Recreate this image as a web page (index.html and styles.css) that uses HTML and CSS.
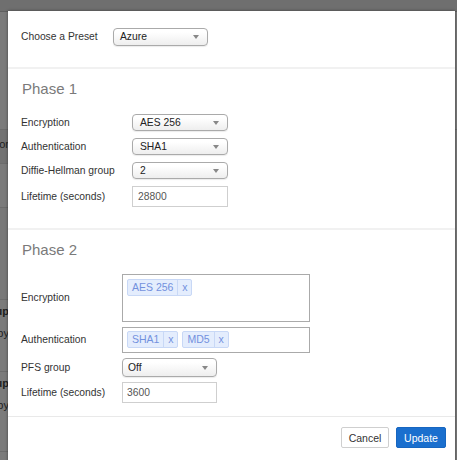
FILE: index.html
```html
<!DOCTYPE html>
<html>
<head>
<meta charset="utf-8">
<link rel="stylesheet" href="styles.css">
</head>
<body>
<div class="bg">
  <div class="bg-top"></div>
  <div class="bg-row r1"></div>
  <div class="bg-row r2"><span class="frag">Vendor</span></div>
  <div class="bg-row r3"></div>
  <div class="bg-row r4"></div>
  <div class="bg-row r5"><span class="frag b">Group</span><span class="frag">Nearby</span></div>
  <div class="bg-row r6"><span class="frag b">Group</span><span class="frag">Nearby</span></div>
</div>

<div class="modal">
  <div class="preset">
    <span class="plabel">Choose a Preset</span>
    <div class="select w95">Azure<i class="caret"></i></div>
  </div>
  <div class="divider"></div>

  <section class="phase">
    <h2>Phase 1</h2>
    <div class="grid g1">
      <span class="lbl">Encryption</span><div class="select sm w96">AES 256<i class="caret"></i></div>
      <span class="lbl">Authentication</span><div class="select sm w96">SHA1<i class="caret"></i></div>
      <span class="lbl">Diffie-Hellman group</span><div class="select sm w96">2<i class="caret"></i></div>
      <span class="lbl">Lifetime (seconds)</span><div class="input w96">28800</div>
    </div>
  </section>
  <div class="divider"></div>

  <section class="phase p2">
    <h2>Phase 2</h2>
    <div class="grid g2">
      <span class="lbl">Encryption</span>
      <div class="multi tall"><span class="tag"><span class="tv">AES 256</span><span class="tx">x</span></span></div>
      <span class="lbl">Authentication</span>
      <div class="multi"><span class="tag"><span class="tv">SHA1</span><span class="tx">x</span></span><span class="tag"><span class="tv">MD5</span><span class="tx">x</span></span></div>
      <span class="lbl">PFS group</span><div class="select pfs w95">Off<i class="caret"></i></div>
      <span class="lbl">Lifetime (seconds)</span><div class="input w95 p2in">3600</div>
    </div>
  </section>
  <div class="divider thin"></div>

  <div class="footer">
    <button class="btn cancel">Cancel</button>
    <button class="btn primary">Update</button>
  </div>
</div>
</body>
</html>
```
FILE: styles.css
```css
* { box-sizing: border-box; }
html, body { margin: 0; padding: 0; }
body {
  width: 457px;
  height: 460px;
  overflow: hidden;
  position: relative;
  background: #7b7b7b;
  font-family: "Liberation Sans", Arial, sans-serif;
  font-size: 10.3px;
  color: #333;
}

/* dimmed page underneath */
.bg { width: 457px; }
.bg-top { height: 12px; background: #6f6f6f; border-bottom: 1px solid #5f5f5f; }
.bg-row { border-bottom: 1px solid #6c6c6c; position: relative; display: flex; flex-direction: column; align-items: flex-end; width: 9px; overflow: visible; }
.r1 { height: 118px; width: 457px; }
.r2 { height: 34px; width: 9px; background: #727272; padding-top: 7px; }
.r3 { height: 44px; width: 9px; }
.r4 { height: 92px; width: 9px; background: #787878; }
.r5 { height: 72px; width: 9px; padding-top: 4px; gap: 8px; }
.r6 { height: 80px; width: 9px; padding-top: 4px; gap: 8px; }
.frag { white-space: nowrap; color: #1e1e1e; font-size: 11px; line-height: 14px; }
.frag.b { font-weight: bold; }

/* modal overlay */
.modal {
  position: absolute;
  left: 8px;
  top: 11px;
  width: 447px;
  height: 460px;
  background: #fff;
  box-shadow: 0 0 3px rgba(0,0,0,0.45);
}

.preset { display: flex; align-items: center; padding: 17px 13px 21px; }
.plabel { width: 92px; margin-top: -2px; }

.divider { height: 2px; background: #f1f1f1; }
.divider.thin { height: 1px; background: #e9e9e9; }

.lbl { margin-top: -1px; }

.select {
  position: relative;
  height: 18px;
  line-height: 16px;
  padding-left: 6px;
  border: 1px solid #aaa;
  border-radius: 4px;
  background: linear-gradient(#ffffff 20%, #eeeeee 100%);
  color: #222;
  box-shadow: 0 1px 1px rgba(0,0,0,0.08);
}
.select.sm { height: 17px; line-height: 15px; padding-left: 7px; }
.select.pfs { height: 19px; line-height: 17px; padding-left: 5px; }
.caret {
  position: absolute;
  right: 8px;
  top: 50%;
  margin-top: -2px;
  width: 0; height: 0;
  border-left: 3px solid transparent;
  border-right: 3px solid transparent;
  border-top: 4px solid #888;
}
.w95 { width: 95px; }
.w96 { width: 96px; }

.input {
  height: 21px;
  line-height: 19px;
  padding-left: 5px;
  border: 1px solid #cfcfcf;
  color: #555;
  background: #fff;
}
.input.p2in { padding-left: 4px; }

.phase { padding: 11px 13px 21px; }
.phase.p2 { padding-bottom: 13px; }
.phase h2 {
  margin: 0 0 16px 1px;
  font-size: 15px;
  line-height: 18px;
  font-weight: normal;
  color: #7a7a7a;
}
.phase.p2 h2 { margin-bottom: 15px; }

.grid { display: grid; align-items: center; }
.g1 { grid-template-columns: 111px 96px; grid-template-rows: 17px 17px 17px 21px; row-gap: 7px; }
.g1 .input { margin-top: -1px; }
.g2 { grid-template-columns: 101px 188px; grid-template-rows: 48px 26px 19px 21px; row-gap: 5px; }
.g2 .multi.tall { margin-bottom: 1px; }

.multi {
  height: 26px;
  border: 1px solid #aaa;
  background: #fff;
  display: flex;
  align-items: flex-start;
  gap: 4px;
  padding: 3px 0 0 4px;
}
.multi.tall { height: 48px; padding-top: 4px; }
.tag {
  display: flex;
  height: 17px;
  line-height: 15px;
  border: 1px solid #c8d8f6;
  background: #e4edfd;
  border-radius: 2px;
  color: #7391dd;
  font-size: 10.5px;
}
.tv { padding: 0 4px 0 4px; border-right: 1px solid #c8d8f6; }
.tx { width: 13px; text-align: center; }

.footer { display: flex; justify-content: flex-end; gap: 7px; padding: 10px 9px 0 0; }
.btn {
  height: 21px;
  font-family: "Liberation Sans", Arial, sans-serif;
  font-size: 10.5px;
  border-radius: 2px;
  padding: 0;
}
.cancel { width: 48px; background: #fff; border: 1px solid #cfcfcf; color: #333; }
.primary { width: 50px; background: #1a6fce; border: 1px solid #1766c0; color: #fff; }
```
